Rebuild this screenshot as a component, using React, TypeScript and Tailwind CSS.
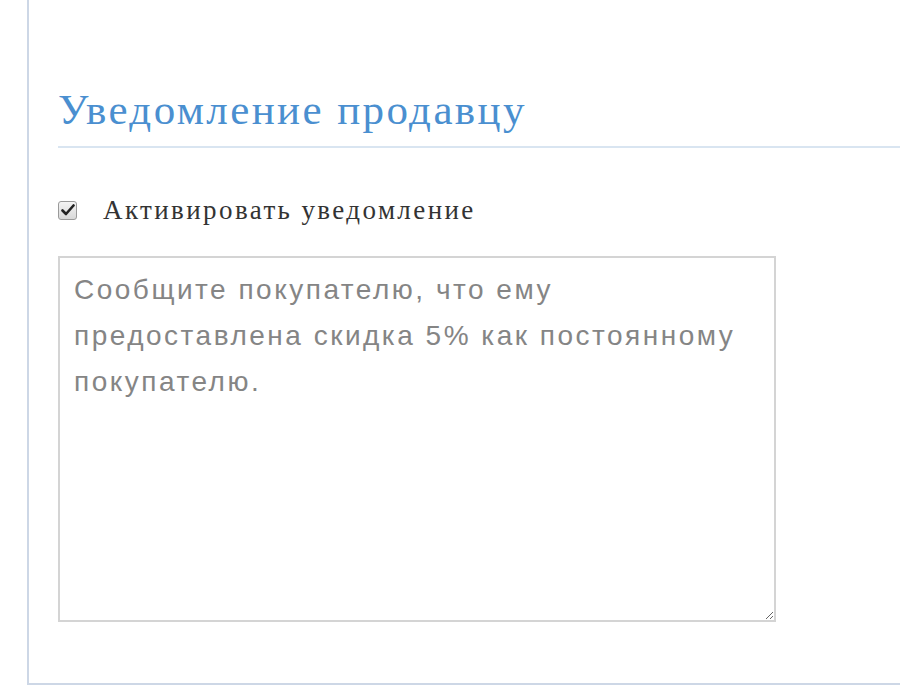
export default function App() {
  return (
    <div className="w-[900px] h-[700px] bg-white overflow-hidden">
      <div className="ml-[27px] h-[685px] border-l-2 border-b-2 border-[#cdd7e6] pl-[29px] pt-[82px]">
        <h2
          className="text-[#4a8fd0] text-[43px] leading-[56px] tracking-[2.4px] pb-[8px] border-b-2 border-[#d9e5f1]"
          style={{ fontFamily: '"Liberation Serif", "Times New Roman", serif' }}
        >
          Уведомление продавцу
        </h2>

        <label
          className="mt-[44px] flex items-center gap-[26px] text-[#333] text-[27px] leading-[36px] tracking-[2.4px]"
          style={{ fontFamily: '"Liberation Serif", "Times New Roman", serif' }}
        >
          <span className="w-[19px] h-[19px] rounded-[3px] border border-[#9a9a9a] bg-gradient-to-b from-[#f4f4f4] to-[#d8d8d8] flex items-center justify-center">
            <svg width="14" height="12" viewBox="0 0 14 12">
              <path d="M1.5 6.5 L5 10 L12.5 1.5" fill="none" stroke="#222" strokeWidth="2.6" strokeLinecap="round" strokeLinejoin="round" />
            </svg>
          </span>
          Активировать уведомление
        </label>

        <textarea
          className="mt-[28px] block w-[718px] h-[366px] border-2 border-[#d4d4d4] px-[14px] pt-[9px] text-[28px] leading-[46px] tracking-[2.5px] text-[#858585] outline-none resize"
          style={{ fontFamily: '"Liberation Sans", Arial, sans-serif' }}
          defaultValue="Сообщите покупателю, что ему предоставлена скидка 5% как постоянному покупателю."
        />
      </div>
    </div>
  );
}
